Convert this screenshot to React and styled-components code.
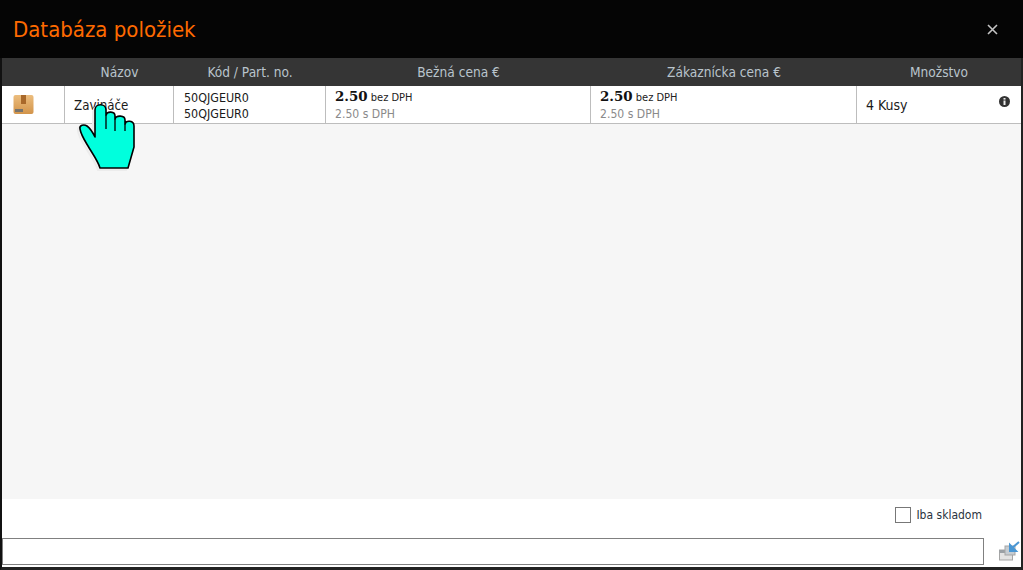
import React from "react";
import styled, { createGlobalStyle } from "styled-components";

const GlobalStyle = createGlobalStyle`
  html, body {
    margin: 0;
    padding: 0;
    background: #fff;
    overflow: hidden;
  }
`;

const Dialog = styled.div`
  position: relative;
  box-sizing: border-box;
  width: 1023px;
  height: 570px;
  display: flex;
  flex-direction: column;
  border-left: 2px solid #111;
  border-right: 2px solid #222;
  border-bottom: 3px solid #222;
  font-family: "DejaVu Sans", "Noto Sans", sans-serif;
  font-stretch: condensed;
  background: #fff;
`;

const TitleBar = styled.div`
  height: 58px;
  flex: none;
  margin: 0 -2px;
  padding: 0 25px 0 13px;
  box-sizing: border-box;
  background: #050505;
  display: flex;
  align-items: center;
  justify-content: space-between;
`;

const Title = styled.h1`
  margin: 0;
  font-size: 22px;
  font-weight: 400;
  color: #ff6a00;
`;

const CloseButton = styled.svg`
  width: 11px;
  height: 11px;
  stroke: #c4c4c4;
  stroke-width: 1.6;
`;

const Row = styled.div`
  display: grid;
  grid-template-columns: 63px 109px 152px 265px 266px 1fr;
  flex: none;
`;

const HeadRow = styled(Row)`
  height: 28px;
  background: #353535;
`;

const HeadCell = styled.div`
  color: #b9c4cc;
  font-size: 13.6px;
  line-height: 28px;
  text-align: center;
`;

const BodyRow = styled(Row)`
  height: 38px;
  box-sizing: border-box;
  background: #fff;
  border-bottom: 1px solid #bdbdbd;
`;

const Cell = styled.div`
  position: relative;
  box-sizing: border-box;
  padding-left: ${(p) => (p.$icon ? "11px" : "9px")};
  border-right: ${(p) => (p.$last ? "none" : "1px solid #bdbdbd")};
  color: #1a1a1a;
  font-size: ${(p) => (p.$last ? "14px" : "13.2px")};
  display: flex;
  flex-direction: column;
  justify-content: center;
`;

const NameCell = styled(Cell)`
  padding-top: 2px;
`;

const CodeCell = styled(Cell)`
  padding-top: 2px;
  padding-left: 10px;
`;

const PriceCell = styled(Cell)`
  padding-top: 1px;
`;

const CodeLine = styled.div`
  font-size: 12.4px;
  line-height: 16px;
`;

const PriceLine = styled.div`
  font-size: 11px;
  line-height: 16px;
  color: #222;
`;

const PriceValue = styled.b`
  font-family: "DejaVu Serif", "Liberation Serif", serif;
  font-stretch: normal;
  font-size: 13.4px;
  font-weight: 700;
  color: #111;
`;

const PriceGross = styled.div`
  font-size: 12.1px;
  line-height: 16px;
  color: #8a8a8a;
`;

const InfoIcon = styled.svg`
  position: absolute;
  top: 10px;
  right: 11px;
  width: 11px;
  height: 11px;
`;

const BoxIcon = styled.svg`
  width: 21px;
  height: 21px;
`;

const Content = styled.div`
  flex: 1;
  background: #f6f6f6;
`;

const Footer = styled.div`
  height: 68px;
  flex: none;
  box-sizing: border-box;
  display: flex;
  flex-direction: column;
  background: #fff;
`;

const StockRow = styled.label`
  display: flex;
  align-items: center;
  justify-content: flex-end;
  gap: 5px;
  height: 39px;
  padding: 0 39px 8px 0;
  box-sizing: border-box;
  color: #2a3340;
  font-size: 12px;
`;

const CheckBox = styled.span`
  box-sizing: border-box;
  width: 16px;
  height: 16px;
  border: 1px solid #777;
  background: #fff;
`;

const SearchRow = styled.div`
  display: flex;
  align-items: center;
  gap: 15px;
`;

const SearchInput = styled.input`
  box-sizing: border-box;
  width: 982px;
  height: 27px;
  border: 1px solid #808080;
  background: #fff;
  padding: 0 6px;
  outline: none;
`;

const HandCursor = styled.svg`
  position: absolute;
  left: 76px;
  top: 101px;
  width: 62px;
  height: 72px;
  pointer-events: none;
`;

const heads = ["", "Názov", "Kód / Part. no.", "Bežná cena €", "Zákaznícka cena €", "Množstvo"];

const handOutline =
  "M4 28 C3 24 8 23 11 25 C14 27 17 32 19 36 L19 9 C19 2 30 2 30 9 L30 14 C31 10 39 10 39 15 L39 18 C40 14 49 14 49 19 L49 23 C50 19 58 19 58 25 L58 46 L52 67 L24 67 C22 60 16 52 12 45 C9 40 5 34 4 28 Z";

function Price() {
  return (
    <PriceCell>
      <PriceLine>
        <PriceValue>2.50</PriceValue> bez DPH
      </PriceLine>
      <PriceGross>2.50 s DPH</PriceGross>
    </PriceCell>
  );
}

export default function App() {
  return (
    <>
      <GlobalStyle />
      <Dialog>
        <TitleBar>
          <Title>Databáza položiek</Title>
          <CloseButton viewBox="0 0 11 11">
            <path d="M1 1 L10 10 M10 1 L1 10" />
          </CloseButton>
        </TitleBar>
        <HeadRow>
          {heads.map((h) => (
            <HeadCell key={h || "icon"}>{h}</HeadCell>
          ))}
        </HeadRow>
        <BodyRow>
          <Cell $icon>
            <BoxIcon viewBox="0 0 21 21">
              <defs>
                <linearGradient id="boxFill" x1="0" y1="0" x2="0" y2="1">
                  <stop offset="0" stopColor="#ecbd7e" />
                  <stop offset="1" stopColor="#d2944a" />
                </linearGradient>
              </defs>
              <rect x="0.5" y="1" width="20" height="19" rx="2" fill="url(#boxFill)" />
              <rect x="8" y="1" width="5" height="9" fill="#a8682a" />
              <rect x="2" y="15" width="8" height="3" fill="#77736c" />
            </BoxIcon>
          </Cell>
          <NameCell>Zavináče</NameCell>
          <CodeCell>
            <CodeLine>50QJGEUR0</CodeLine>
            <CodeLine>50QJGEUR0</CodeLine>
          </CodeCell>
          <Price />
          <Price />
          <Cell $last>
            4 Kusy
            <InfoIcon viewBox="0 0 11 11">
              <circle cx="5.5" cy="5.5" r="5.5" fill="#333" />
              <rect x="4.5" y="2" width="2" height="1.6" fill="#eee" />
              <rect x="4.5" y="4.5" width="2" height="4.5" fill="#eee" />
            </InfoIcon>
          </Cell>
        </BodyRow>
        <Content />
        <Footer>
          <StockRow>
            <CheckBox />
            Iba skladom
          </StockRow>
          <SearchRow>
            <SearchInput />
            <svg width="21" height="21" viewBox="0 0 21 21">
              <rect x="0.5" y="9" width="13" height="10" fill="#e3e3e3" stroke="#a5a5a5" />
              <rect x="0.5" y="9" width="13" height="3" fill="#9aa0a5" />
              <rect x="6" y="5" width="10" height="9" fill="#c5ccd2" stroke="#a5a5a5" />
              <path d="M20 1 L13 7 M11 4 L11 10 L17 10 Z" stroke="#4a97d4" strokeWidth="2" fill="#4a97d4" />
            </svg>
          </SearchRow>
        </Footer>
      </Dialog>
      <HandCursor viewBox="0 0 62 72">
        <path d={handOutline} fill="none" stroke="#ececec" strokeWidth="2" transform="translate(-2 2)" />
        <path d={handOutline} fill="#00ffdd" stroke="#000" strokeWidth="1.6" strokeLinejoin="round" />
        <path d="M30 14 L30 28 M39 18 L39 30 M49 23 L49 30" stroke="#000" strokeWidth="1.3" fill="none" />
      </HandCursor>
    </>
  );
}
